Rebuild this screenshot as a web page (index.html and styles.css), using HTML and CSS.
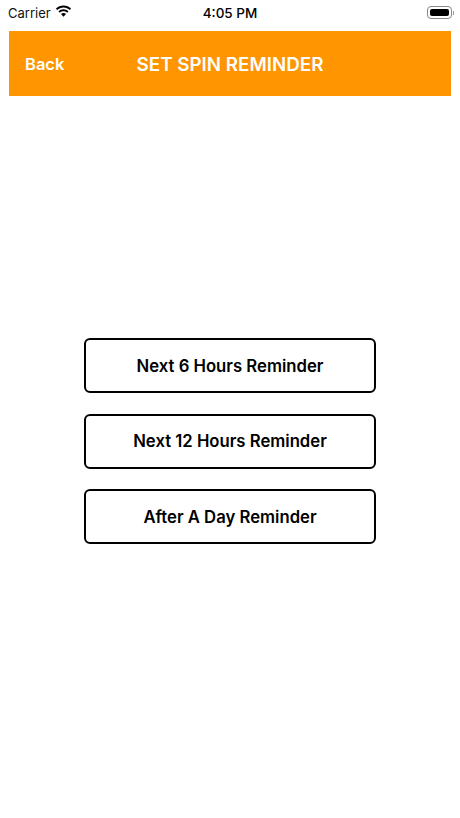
FILE: index.html
```html
<!DOCTYPE html>
<html lang="en">
  <head>
    <meta charset="UTF-8" />
    <meta name="viewport" content="width=device-width, initial-scale=1.0" />
    <title>Set Spin Reminder</title>
    <link rel="stylesheet" href="styles.css">
  </head>
  <body>
    <!-- Status bar -->
    <div class="status-bar">
      <div class="status-left">
        <span class="carrier">Carrier</span>
        <svg class="wifi" width="17" height="13" viewBox="0 0 17 13">
          <path d="M8.5 2.6c2.4 0 4.6.9 6.3 2.5l1.3-1.4C14.1 1.7 11.4.6 8.5.6S2.900 1.700.9 3.700l1.300 1.400C3.900 3.500 6.100 2.600 8.500 2.600z" />
          <path d="M8.5 6.300c1.400 0 2.700.5 3.700 1.400l1.300-1.400C12.200 5 10.400 4.300 8.500 4.300S4.800 5 3.500 6.300l1.300 1.400c1-.9 2.300-1.400 3.700-1.400z" />
          <path d="M8.5 8c-1 0-1.800.4-2.500 1l2.500 2.800L11 9c-.7-.6-1.500-1-2.500-1z" />
        </svg>
      </div>
      <span class="clock">4:05 PM</span>
      <div class="status-right">
        <div class="battery"><div class="battery-level"></div></div>
        <div class="battery-cap"></div>
      </div>
    </div>

    <!-- Orange header -->
    <div class="header">
      <span class="back">Back</span>
      <span class="title">SET SPIN REMINDER</span>
    </div>

    <!-- Reminder options -->
    <div class="options">
      <button class="option">Next 6 Hours Reminder</button>
      <button class="option">Next 12 Hours Reminder</button>
      <button class="option">After A Day Reminder</button>
    </div>
  </body>
</html>
```

FILE: styles.css
```css
* {
  box-sizing: border-box;
}

body {
  margin: 0;
  height: 818px;
  background-color: #fff;
  font-family: Inter, "Liberation Sans", sans-serif;
  color: #000;
  overflow: hidden;
}

/* Status bar */
.status-bar {
  height: 31px;
  padding: 0 6px 6px 8px;
  display: flex;
  align-items: center;
  justify-content: space-between;
}

.status-left {
  display: flex;
  align-items: center;
  gap: 5px;
  width: 143px;
}

.carrier {
  font-size: 13px;
  color: #111;
}

.wifi {
  fill: #000;
  margin-top: -2px;
  margin-left: -1px;
}

.clock {
  font-size: 13.5px;
  font-weight: 500;
}

.status-right {
  width: 145px;
  display: flex;
  align-items: center;
  justify-content: flex-end;
  gap: 1px;
}

.battery {
  width: 25px;
  height: 13px;
  padding: 2px;
  border: 1px solid #888;
  border-radius: 4px;
}

.battery-level {
  height: 100%;
  background-color: #000;
  border-radius: 2px;
}

.battery-cap {
  width: 1px;
  height: 4px;
  background-color: #999;
}

/* Header */
.header {
  height: 65px;
  margin: 0 9px;
  background-color: #ff9500;
  color: #fff;
  display: flex;
  align-items: center;
  justify-content: center;
  position: relative;
}

.back {
  position: absolute;
  left: 16px;
  font-size: 16.5px;
  font-weight: 600;
}

.title {
  font-size: 18.8px;
  font-weight: 600;
  padding-top: 1px;
}

/* Buttons */
.options {
  margin-top: 242px;
  display: flex;
  flex-direction: column;
  align-items: center;
  gap: 20.5px;
}

.option {
  width: 292px;
  height: 55px;
  background-color: #fff;
  border: 2.5px solid #000;
  border-radius: 6px;
  font-family: inherit;
  font-size: 16.7px;
  font-weight: 600;
  color: #000;
}
```
